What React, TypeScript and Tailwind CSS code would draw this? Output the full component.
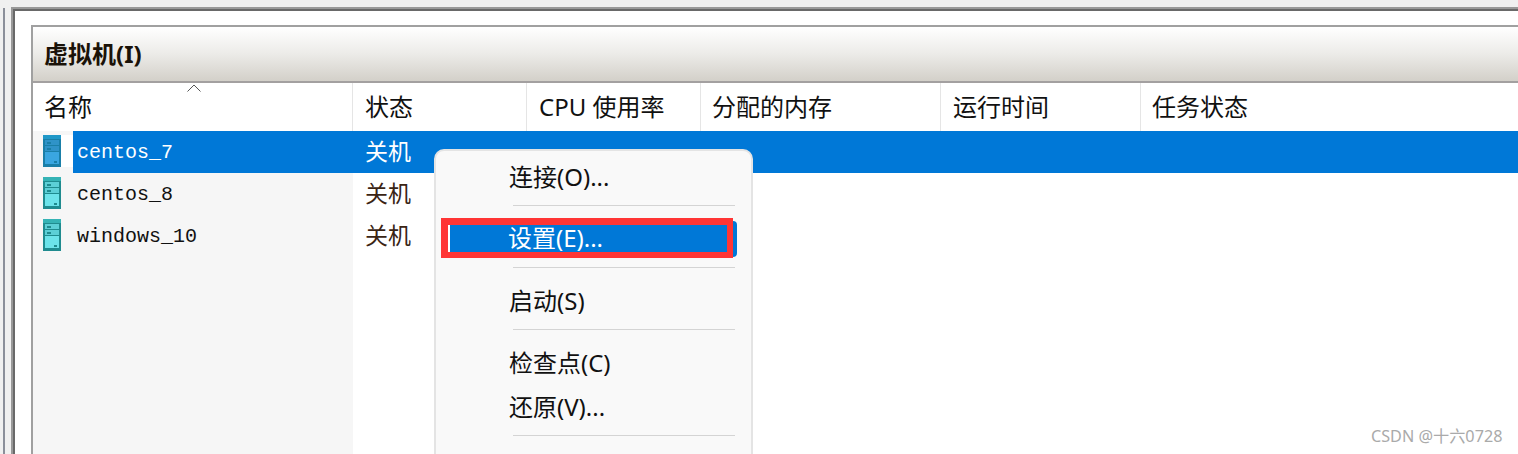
const UI_FONT = "font-['Noto_Sans','Noto_Sans_CJK_SC',sans-serif]"

const COLUMNS = [
  { label: '状态', width: 'w-[174px]', pad: 'pl-[12px]' },
  { label: 'CPU 使用率', width: 'w-[174px]', pad: 'pl-[12px]' },
  { label: '分配的内存', width: 'w-[240px]', pad: 'pl-[11px]' },
  { label: '运行时间', width: 'w-[200px]', pad: 'pl-[12px]' },
  { label: '任务状态', width: 'flex-1', pad: 'pl-[11px]' },
]

const MACHINES = ['centos_7', 'centos_8', 'windows_10']

function ServerIcon({ selected }: { selected: boolean }) {
  const band = selected ? '#2098c8' : '#35b3b5'
  const frame = selected ? '#1a7fa8' : '#1f8b8f'
  const light = selected ? '#3aa6e0' : '#6ce3ea'
  const mid = selected ? '#2f93c8' : '#5ccfd6'
  return (
    <svg width="18" height="32" viewBox="0 0 18 32" className="shrink-0">
      <rect width="18" height="32" fill={frame} />
      <rect width="18" height="4" fill={band} />
      <rect x="2" y="5" width="14" height="5" fill={mid} />
      <rect x="2" y="11" width="14" height="5" fill={mid} />
      <rect x="2" y="17" width="14" height="12" fill={light} />
      <rect x="4" y="7" width="4" height="2" fill={frame} />
      <rect x="4" y="13" width="4" height="2" fill={frame} />
      <rect x="11" y="26" width="3" height="2" fill={frame} />
    </svg>
  )
}

function MachineRow({ name, selected }: { name: string; selected: boolean }) {
  return (
    <div className="flex h-[42px]">
      <div className="flex w-[320px] shrink-0 bg-[#f6f6f6]">
        <div className="flex w-[40px] items-start pl-[10px] pt-[4px]">
          <ServerIcon selected={selected} />
          {selected && <div className="h-[32px] w-[12px] shrink-0 bg-white" />}
        </div>
        <div className={`flex-1 pl-[4px] font-['Liberation_Mono',monospace] text-[20px] leading-[44px] ${selected ? 'bg-[#0078d7] text-white' : 'text-[#111]'}`}>
          {name}
        </div>
      </div>
      <div className={`flex-1 pl-[12px] text-[23px] leading-[40px] ${selected ? 'bg-[#0078d7] text-white' : 'text-[#3a2414]'}`}>
        关机
      </div>
    </div>
  )
}

function Separator() {
  return <div className="ml-[77px] mr-[16px] h-px bg-[#d4d4d4]" />
}

function ContextMenu() {
  return (
    <div className="absolute left-[434px] top-[149px] h-[340px] w-[319px] rounded-[10px] border-2 border-[#e4e4e4] bg-[#f9f9f9] text-[24px] text-[#111]">
      <div className="h-[54px] pl-[73px] pt-[7px] leading-[38px]">连接(O)...</div>
      <Separator />
      <div className="relative mt-[15px] ml-[5px] mr-[14px] h-[36px] rounded-r-[4px] bg-[#0078d7] pl-[67px] leading-[34px] text-white">
        设置(E)...
        <div className="absolute left-[7px] top-[4px] h-[27px] w-[2px] bg-white" />
        <div className="absolute left-0 top-[-3px] h-[40px] w-[292px] border-[7px] border-b-[6px] border-r-[6px] border-[#ff3535]" />
      </div>
      <div className="h-[10px]" />
      <Separator />
      <div className="h-[61px] pl-[73px] leading-[65px]">启动(S)</div>
      <Separator />
      <div className="h-[65px] pl-[73px] leading-[65px]">检查点(C)</div>
      <div className="h-[25px] pl-[73px] leading-[23px]">还原(V)...</div>
      <div className="h-[15px]" />
      <Separator />
    </div>
  )
}

export default function App() {
  return (
    <div className={`relative flex h-[454px] w-[1518px] overflow-hidden bg-[#f0f0f0] pt-[7px] ${UI_FONT}`}>
      {/* left pane edge */}
      <div className="ml-[3px] mt-px w-[2px] shrink-0 bg-[#8b8f9a]" />

      {/* main pane */}
      <div className="ml-[6px] flex-1 border-l-2 border-t-2 border-[#999999]">
        <div className="h-full border-l-2 border-t-2 border-[#696969] bg-white pl-[16px] pt-[14px]">
          <div className="flex h-full flex-col border-l-2 border-t-2 border-[#a0a0a0]">
            <div className="h-[54px] shrink-0 bg-gradient-to-b from-white via-[#ecebe8] to-[#d3d0c9] pl-[11px] text-[24px] font-bold leading-[54px] text-[#1a1208]">
              虚拟机(I)
            </div>
            <div className="h-[2px] shrink-0 bg-[#a3a0a0]" />

            {/* column headers */}
            <div className="relative flex h-[48px] shrink-0 text-[24px] leading-[48px] text-[#111]">
              <svg width="14" height="8" viewBox="0 0 14 8" className="absolute left-[154px] top-[1px]">
                <path d="M0.5 7.5 L7 1 L13.5 7.5" fill="none" stroke="#555" strokeWidth="1" />
              </svg>
              <div className="w-[320px] shrink-0 border-r border-[#e5e5e5] pl-[11px]">名称</div>
              {COLUMNS.map((col) => (
                <div key={col.label} className={`${col.width} ${col.pad} shrink-0 border-r border-[#e5e5e5] last:border-r-0`}>
                  {col.label}
                </div>
              ))}
            </div>

            {/* rows */}
            {MACHINES.map((name, i) => (
              <MachineRow key={name} name={name} selected={i === 0} />
            ))}
            <div className="w-[320px] flex-1 bg-[#f6f6f6]" />
          </div>
        </div>
      </div>

      <ContextMenu />

      <div className="absolute left-[1371px] top-[425px] text-[16.2px] leading-[22px] text-[#aaaaaa]">CSDN @十六0728</div>
    </div>
  )
}
